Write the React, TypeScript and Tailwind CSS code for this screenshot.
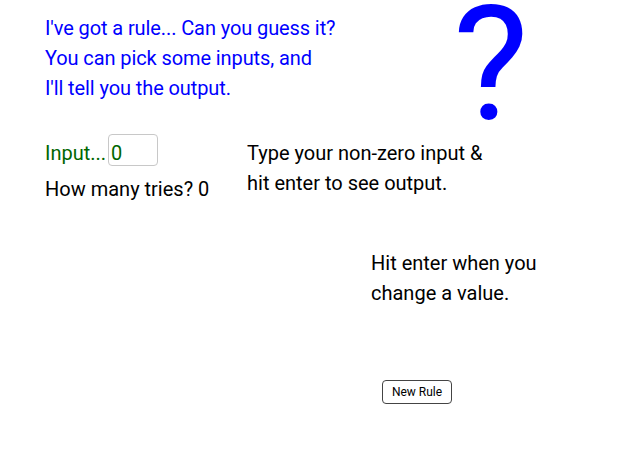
export default function App() {
  return (
    <div className="relative w-[619px] h-[458px] overflow-hidden bg-white font-['Roboto',sans-serif]">
      {/* free canvas: each text object sits at its own spot */}
      <div className="absolute left-[45px] top-[13px] text-[20px] leading-[30px] tracking-[-0.1px] text-[#0000ff]">
        <p>I've got a rule... Can you guess it?</p>
        <p>You can pick some inputs, and</p>
        <p>I'll tell you the output.</p>
      </div>

      <div className="absolute left-[453px] top-0 text-[160px] leading-[130px] text-[#0000ff]">?</div>

      <div className="absolute left-[45px] top-[134px] flex items-start text-[20px] leading-[30px] text-[#006600]">
        <span className="mt-[4px]">Input...</span>
        <div className="ml-[2px] h-[32px] w-[50px] rounded-[4px] border border-[#c8c8c8] pl-[2px] pt-[3px]">0</div>
      </div>

      <p className="absolute left-[45px] top-[174px] text-[20px] leading-[30px] text-black">How many tries? 0</p>

      <div className="absolute left-[247px] top-[138px] text-[20px] leading-[30px] text-black">
        <p>Type your non-zero input &amp;</p>
        <p>hit enter to see output.</p>
      </div>

      <div className="absolute left-[371px] top-[248px] text-[20px] leading-[30px] text-black">
        <p>Hit enter when you</p>
        <p>change a value.</p>
      </div>

      <button className="absolute left-[382px] top-[380px] flex h-[24px] w-[70px] items-center justify-center rounded-[4px] border border-[#444] bg-white text-[12px] text-black">
        New Rule
      </button>
    </div>
  );
}
